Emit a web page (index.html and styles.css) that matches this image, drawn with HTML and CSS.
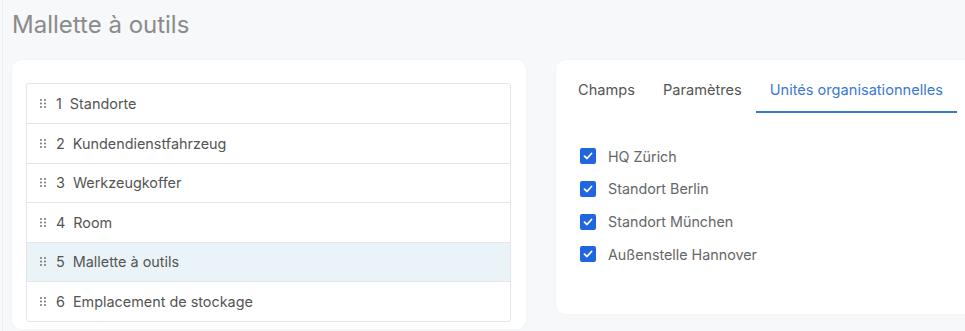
FILE: index.html
```html
<!DOCTYPE html>
<html lang="fr">
<head>
<meta charset="utf-8">
<link rel="stylesheet" href="styles.css">
</head>
<body>
<div class="edge"></div>
<div class="page">
  <h1 class="title">Mallette à outils</h1>
  <div class="columns">
    <section class="card card-left">
      <ul class="list">
        <li class="row"><svg class="grip" width="6" height="9" viewBox="0 0 6 9"><circle cx="1" cy="1" r="0.9"/><circle cx="5" cy="1" r="0.9"/><circle cx="1" cy="4.5" r="0.9"/><circle cx="5" cy="4.5" r="0.9"/><circle cx="1" cy="8" r="0.9"/><circle cx="5" cy="8" r="0.9"/></svg><span class="num">1</span><span>Standorte</span></li>
        <li class="row"><svg class="grip" width="6" height="9" viewBox="0 0 6 9"><circle cx="1" cy="1" r="0.9"/><circle cx="5" cy="1" r="0.9"/><circle cx="1" cy="4.5" r="0.9"/><circle cx="5" cy="4.5" r="0.9"/><circle cx="1" cy="8" r="0.9"/><circle cx="5" cy="8" r="0.9"/></svg><span class="num">2</span><span>Kundendienstfahrzeug</span></li>
        <li class="row"><svg class="grip" width="6" height="9" viewBox="0 0 6 9"><circle cx="1" cy="1" r="0.9"/><circle cx="5" cy="1" r="0.9"/><circle cx="1" cy="4.5" r="0.9"/><circle cx="5" cy="4.5" r="0.9"/><circle cx="1" cy="8" r="0.9"/><circle cx="5" cy="8" r="0.9"/></svg><span class="num">3</span><span>Werkzeugkoffer</span></li>
        <li class="row"><svg class="grip" width="6" height="9" viewBox="0 0 6 9"><circle cx="1" cy="1" r="0.9"/><circle cx="5" cy="1" r="0.9"/><circle cx="1" cy="4.5" r="0.9"/><circle cx="5" cy="4.5" r="0.9"/><circle cx="1" cy="8" r="0.9"/><circle cx="5" cy="8" r="0.9"/></svg><span class="num">4</span><span>Room</span></li>
        <li class="row row-active"><svg class="grip" width="6" height="9" viewBox="0 0 6 9"><circle cx="1" cy="1" r="0.9"/><circle cx="5" cy="1" r="0.9"/><circle cx="1" cy="4.5" r="0.9"/><circle cx="5" cy="4.5" r="0.9"/><circle cx="1" cy="8" r="0.9"/><circle cx="5" cy="8" r="0.9"/></svg><span class="num">5</span><span>Mallette à outils</span></li>
        <li class="row"><svg class="grip" width="6" height="9" viewBox="0 0 6 9"><circle cx="1" cy="1" r="0.9"/><circle cx="5" cy="1" r="0.9"/><circle cx="1" cy="4.5" r="0.9"/><circle cx="5" cy="4.5" r="0.9"/><circle cx="1" cy="8" r="0.9"/><circle cx="5" cy="8" r="0.9"/></svg><span class="num">6</span><span>Emplacement de stockage</span></li>
      </ul>
    </section>
    <section class="card card-right">
      <nav class="tabs">
        <span class="tab">Champs</span>
        <span class="tab">Paramètres</span>
        <span class="tab tab-active">Unités organisationnelles</span>
      </nav>
      <div class="checks">
        <label class="check"><span class="box"><svg width="10" height="8" viewBox="0 0 10 8"><path d="M1.5 4.2 L4 6.5 L8.5 1.5" fill="none" stroke="#fff" stroke-width="1.8" stroke-linecap="round" stroke-linejoin="round"/></svg></span>HQ Zürich</label>
        <label class="check"><span class="box"><svg width="10" height="8" viewBox="0 0 10 8"><path d="M1.5 4.2 L4 6.5 L8.5 1.5" fill="none" stroke="#fff" stroke-width="1.8" stroke-linecap="round" stroke-linejoin="round"/></svg></span>Standort Berlin</label>
        <label class="check"><span class="box"><svg width="10" height="8" viewBox="0 0 10 8"><path d="M1.5 4.2 L4 6.5 L8.5 1.5" fill="none" stroke="#fff" stroke-width="1.8" stroke-linecap="round" stroke-linejoin="round"/></svg></span>Standort München</label>
        <label class="check"><span class="box"><svg width="10" height="8" viewBox="0 0 10 8"><path d="M1.5 4.2 L4 6.5 L8.5 1.5" fill="none" stroke="#fff" stroke-width="1.8" stroke-linecap="round" stroke-linejoin="round"/></svg></span>Außenstelle Hannover</label>
      </div>
    </section>
  </div>
</div>
</body>
</html>
```

FILE: styles.css
```css
* { box-sizing: border-box; }
html, body { margin: 0; padding: 0; }
body {
  background: #f7f8fa;
  font-family: Inter, "Noto Sans", sans-serif;
  width: 965px;
  height: 331px;
  overflow: hidden;
  position: relative;
}
.edge {
  position: absolute;
  left: 2px;
  top: 0;
  bottom: 0;
  width: 1px;
  background: #eceef1;
}
.page {
  padding: 8px 0 0 12px;
}
.title {
  margin: 0;
  font-size: 24px;
  font-weight: 400;
  line-height: 34px;
  color: #8b8b8b;
  height: 52px;
}
.columns {
  display: flex;
  gap: 30px;
  align-items: flex-start;
}
.card {
  background: #fff;
  border-radius: 9px;
  box-shadow: 0 0 3px rgba(0,0,0,0.04);
  flex-shrink: 0;
}
.card-left {
  width: 514px;
  padding: 23px 15px 7px 14px;
}
.list {
  list-style: none;
  margin: 0;
  padding: 0;
  border: 1px solid #e4e5e7;
  border-radius: 3px;
}
.row {
  display: flex;
  align-items: center;
  height: 39.5px;
  padding-left: 13px;
  font-size: 14.4px;
  color: #555;
  border-top: 1px solid #e4e5e7;
}
.row:first-child { border-top: none; height: 39px; }
.row-active { background: #e9f3f8; }
.grip { fill: #666; margin-right: 10px; }
.num { margin-right: 8px; }
.card-right {
  width: 420px;
  height: 254px;
  padding: 0 0 0 8px;
}
.tabs {
  display: flex;
}
.tab {
  padding: 20px 14px 11px;
  font-size: 14.6px;
  line-height: 20px;
  color: #555;
  border-bottom: 2px solid transparent;
}
.tab-active {
  color: #3b79d0;
  border-bottom-color: #3b79d0;
}
.checks {
  padding: 27px 0 0 16px;
  display: flex;
  flex-direction: column;
}
.check {
  display: flex;
  align-items: center;
  height: 32.67px;
  font-size: 14.3px;
  color: #666;
}
.box {
  width: 16px;
  height: 16px;
  border-radius: 2px;
  background: #1f66e0;
  display: flex;
  align-items: center;
  justify-content: center;
  margin-right: 12px;
}
```
